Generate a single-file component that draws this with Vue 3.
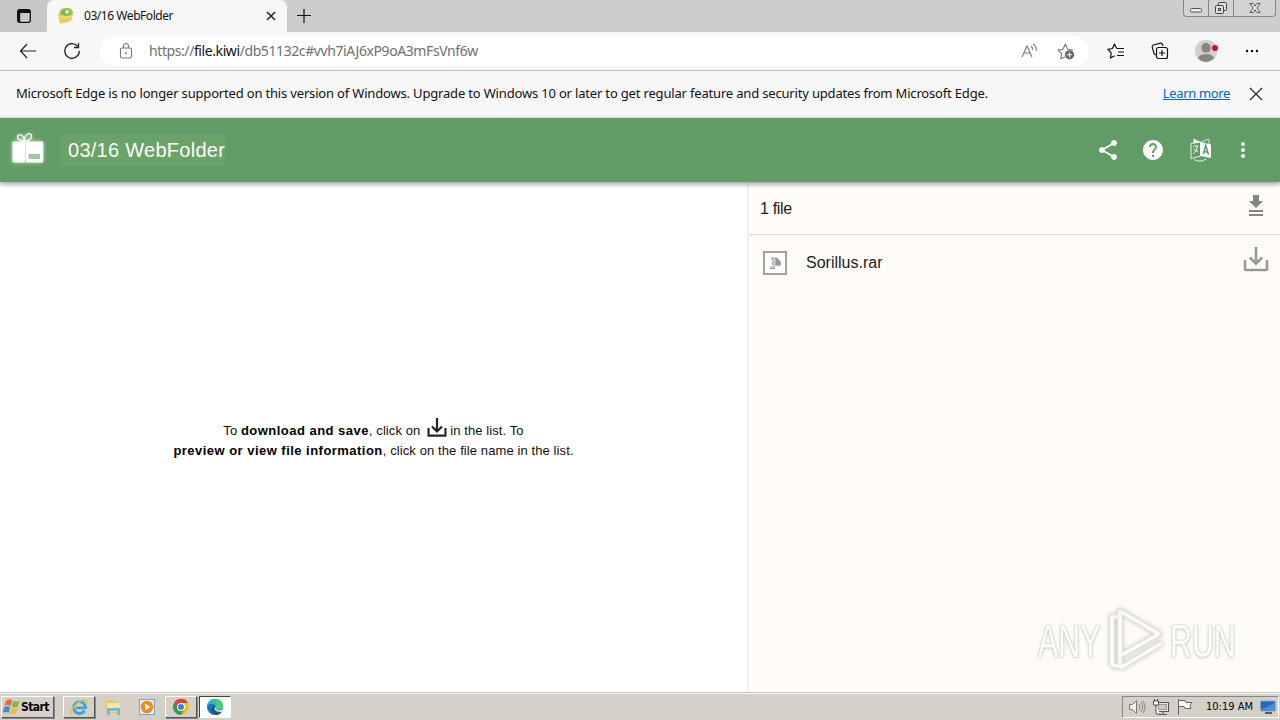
<script setup>
import { ref } from 'vue'

const title = ref('03/16 WebFolder')
const files = ref([{ name: 'Sorillus.rar' }])
const time = '10:19 AM'
</script>

<template>
  <div class="screen">
    <div class="tab-strip">
      <div class="tab-actions">
        <svg width="16" height="16" viewBox="0 0 16 16">
          <rect x="1.7" y="1.7" width="12.6" height="12.6" rx="2" fill="none" stroke="#111" stroke-width="1.3" />
          <path d="M1.5 5V3.5a2 2 0 0 1 2-2h9a2 2 0 0 1 2 2V5zM1.5 4h2.7v10h-1a2 2 0 0 1-1.700-2z" fill="#111" />
        </svg>
      </div>
      <div class="tab">
        <svg class="favicon" width="18" height="18" viewBox="0 0 18 18">
          <path d="M2 8Q2 2 8 1q6-1 8 4l-1 5-11 2z" fill="#9cc653" />
          <path d="M4 6q2-4 6-3l4 3-5 4z" fill="#77b84b" />
          <circle cx="10" cy="5" r="2" fill="#d8e8c0" />
          <path d="M1 7l7 2 8-1-2 6-11 3z" fill="#e9ce59" />
          <path d="M2 9l6 2 6-2" fill="none" stroke="#f6e48c" />
        </svg>
        <span class="tab-title">{{ title }}</span>
        <svg class="tab-close" width="10" height="10" viewBox="0 0 10 10">
          <path d="M1 1l8 8M9 1L1 9" stroke="#222" stroke-width="1.5" />
        </svg>
      </div>
      <svg class="new-tab" width="16" height="16" viewBox="0 0 16 16">
        <path d="M8 1v14M1 7.500h14" stroke="#111" stroke-width="1.2" />
      </svg>
      <div class="window-controls">
        <span class="control">
          <svg width="14" height="16" viewBox="0 0 14 16">
            <rect x="1.5" y="8.5" width="11" height="3.5" rx="1" fill="#eee" stroke="#555" />
          </svg>
        </span>
        <span class="control">
          <svg width="14" height="16" viewBox="0 0 14 16">
            <g fill="#ddd" stroke="#444">
              <rect x="4.5" y="2.5" width="8" height="8" rx="1" />
              <rect x="1.5" y="5.5" width="8" height="8" rx="1" />
              <rect x="4.5" y="8.5" width="2" height="2" />
            </g>
          </svg>
        </span>
        <span class="control wide">
          <svg width="14" height="16" viewBox="0 0 14 16">
            <path d="M2 3.500h3l2 2.700 2-2.700h3L8.800 8l3.200 4.500h-3l-2-2.700-2 2.700h-3L5.200 8z" fill="#eee" stroke="#555" stroke-width="1" />
          </svg>
        </span>
      </div>
    </div>

    <div class="toolbar">
      <svg class="back" width="18" height="16" viewBox="0 0 18 16">
        <path d="M8 1L1.500 8 8 15M1.500 8H17" fill="none" stroke="#222" stroke-width="1.2" />
      </svg>
      <svg class="reload" width="18" height="18" viewBox="0 0 18 18">
        <path d="M16.300 9A7.300 7.300 0 1 1 14.500 4.200M15.500 1v4.500H11" fill="none" stroke="#222" stroke-width="1.3" />
      </svg>
      <div class="address">
        <svg class="lock" width="14" height="16" viewBox="0 0 14 16">
          <rect x="1.500" y="5" width="11" height="10" rx="1.500" fill="none" stroke="#777" stroke-width="1.1" />
          <path d="M4.500 5V3a2.500 2.500 0 0 1 5 0v2" fill="none" stroke="#777" stroke-width="1.100" />
          <circle cx="7" cy="10.300" r="1" fill="#777" />
        </svg>
        <span class="url">https://<b>file.kiwi</b>/db51132c#vvh7iAJ6xP9oA3mFsVnf6w</span>
        <svg class="read-aloud" width="17" height="16" viewBox="0 0 17 16">
          <path d="M1 14L6 3l5 11M2.800 10h6.400M10 3q2 1.500 1.500 4M12 1q4 2.500 3 7" fill="none" stroke="#777" stroke-width="1.100" />
        </svg>
        <svg class="favorite" width="18" height="18" viewBox="0 0 18 18">
          <path d="M8 15l-4.200 1.800.8-5L1 8l5-.8L8.300 2l2.400 5.200L16 8" fill="none" stroke="#777" stroke-width="1.100" stroke-linejoin="round" />
          <circle cx="12.500" cy="12.800" r="4.600" fill="#666" />
          <path d="M12.500 10.200v5.200M9.900 12.800h5.200" stroke="#fff" stroke-width="1.100" />
        </svg>
      </div>
      <svg class="favorites" width="18" height="18" viewBox="0 0 18 18">
        <path d="M9.500 6.200L7.500 2 5.400 6.500.8 7.400l3.400 3.500-.8 5.100 4.300-2.300M9.500 6.500H17M11 10h6M10 13.500h7" fill="none" stroke="#111" stroke-width="1.200" stroke-linejoin="round" />
      </svg>
      <svg class="collections" width="18" height="18" viewBox="0 0 18 18">
        <path d="M4.500 13L3 11.500 1.200 5Q1 3.500 2.500 3l7-1.800q1.500-.2 2 1.300L12 4" fill="none" stroke="#111" stroke-width="1.200" />
        <rect x="5.500" y="5.500" width="11" height="11" rx="2" fill="#f7f7f7" stroke="#111" stroke-width="1.200" />
        <path d="M11 8v6M8 11h6" stroke="#111" stroke-width="1.200" />
      </svg>
      <svg class="avatar" width="24" height="24" viewBox="0 0 24 24">
        <circle cx="12" cy="12" r="11.200" fill="#d0d0ce" />
        <circle cx="12" cy="8.800" r="4.800" fill="#888583" />
        <path d="M4 19.500Q5 15 12 15t8 4.500Q12 26.500 4 19.500z" fill="#888583" />
        <circle cx="21" cy="9" r="3" fill="#d4121d" />
      </svg>
      <svg class="more" width="14" height="4" viewBox="0 0 14 4">
        <circle cx="2" cy="2" r="1.200" /><circle cx="7" cy="2" r="1.200" /><circle cx="12" cy="2" r="1.200" />
      </svg>
    </div>

    <div class="info-bar">
      <span class="info-text">Microsoft Edge is no longer supported on this version of Windows. Upgrade to Windows 10 or later to get regular feature and security updates from Microsoft Edge.</span>
      <a class="learn-more">Learn more</a>
      <svg width="14" height="14" viewBox="0 0 14 14">
        <path d="M1 1l12 12M13 1L1 13" stroke="#222" stroke-width="1.100" />
      </svg>
    </div>

    <header class="app-header">
      <svg class="gift" width="36" height="36" viewBox="0 0 36 36">
        <g fill="none" stroke="#fff" stroke-width="1.300">
          <path d="M16 9Q9 8 9.500 4.500 11 1 14.500 4q2 2 1.500 5z" />
          <path d="M16.500 9q-.5-5 3.500-7 4-1 3.500 3-1.500 4-7 4z" />
        </g>
        <rect x="4.500" y="9.500" width="12.700" height="21" rx="1" fill="#fff" />
        <rect x="17.800" y="9.500" width="17.400" height="21" rx="1" fill="#fff" />
        <rect x="20.500" y="22" width="11.500" height="5" fill="#a5c5a5" />
      </svg>
      <h1 class="title">{{ title }}</h1>
      <svg class="share" width="24" height="24" viewBox="0 0 24 24">
        <path d="M18 16.080c-.76 0-1.440.3-1.960.77L8.910 12.700c.05-.23.09-.46.09-.7s-.04-.47-.09-.7l7.050-4.110c.54.5 1.250.81 2.040.81 1.660 0 3-1.340 3-3s-1.340-3-3-3-3 1.340-3 3c0 .24.04.47.09.7L8.040 9.810C7.500 9.310 6.790 9 6 9c-1.660 0-3 1.340-3 3s1.340 3 3 3c.79 0 1.500-.31 2.040-.81l7.120 4.160c-.05.21-.08.43-.08.65 0 1.610 1.310 2.920 2.920 2.920s2.920-1.310 2.920-2.920-1.310-2.920-2.920-2.920z" fill="#fff" />
      </svg>
      <svg class="help" width="24" height="24" viewBox="0 0 24 24">
        <path d="M12 2C6.480 2 2 6.480 2 12s4.480 10 10 10 10-4.480 10-10S17.520 2 12 2zm1 17h-2v-2h2v2zm2.070-7.750l-.9.920C13.450 12.900 13 13.500 13 15h-2v-.5c0-1.100.45-2.100 1.170-2.830l1.240-1.260c.37-.36.59-.86.59-1.410 0-1.100-.9-2-2-2s-2 .9-2 2H8c0-2.210 1.790-4 4-4s4 1.790 4 4c0 .88-.36 1.680-.93 2.250z" fill="#fff" />
      </svg>
      <svg class="translate" width="24" height="24" viewBox="0 0 24 24">
        <path d="M2 5.500l9.500-1.500v14L2 20.500z" fill="none" stroke="#e8f2e8" />
        <path d="M4.500.5l7 3.500-7 1z" fill="#fff" />
        <path d="M12 4l8-3v5" fill="none" stroke="#d7e8d7" />
        <path d="M11.500 4L22 6.500V20l-10.500-2z" fill="#fff" />
        <path d="M4.500 8.500l4-1q0 5-4 8M4.500 11l4.500 3" fill="none" stroke="#fff" />
        <path d="M14.300 16l2.500-8.500 2.700 9.200M15 13.500l4 .7" fill="none" stroke="#619b65" stroke-width="1.500" />
        <path d="M5 21.500q6 3.500 12-.5" fill="none" stroke="#e8f2e8" />
      </svg>
      <svg class="dots" width="24" height="24" viewBox="0 0 24 24" fill="#fff">
        <circle cx="12" cy="6" r="2" /><circle cx="12" cy="12" r="2" /><circle cx="12" cy="18" r="2" />
      </svg>
    </header>

    <main class="content">
      <section class="preview">
        <p class="hint">
          <span class="hint-line first">To <b>download and save</b>, click on
            <svg class="hint-icon" width="20" height="20" viewBox="0 0 26 26">
              <path d="M2 13v10h22V13M13 0v17M6.500 11l6.500 6.500 6.500-6.500" fill="none" stroke="#222" stroke-width="2.800" />
            </svg>in the list. To</span>
          <span class="hint-line second"><b>preview or view file information</b>, click on the file name in the list.</span>
        </p>
      </section>
      <aside class="file-panel">
        <div class="panel-head">
          <span class="count">{{ files.length }} file</span>
          <svg width="16" height="22" viewBox="0 0 16 22">
            <path d="M5 0h6v6h4l-7 7-7-7h4zM1 15h14v2H1zM1 19h14v2H1z" fill="#858580" />
          </svg>
        </div>
        <div v-for="file in files" :key="file.name" class="file-row">
          <svg class="file-icon" width="24" height="24" viewBox="0 0 24 24">
            <rect x="1" y="1" width="22" height="22" fill="#fff" stroke="#a3a3a3" stroke-width="2" />
            <path d="M8 6h6l4 4v5h-6v2H7v-2h2V8H8z" fill="#ccc" />
            <path d="M13 7l4 4v3h-4zM9.500 7v2M9.500 11v2M7 17.500h5" fill="#999" stroke="#999" />
          </svg>
          <span class="file-name">{{ file.name }}</span>
          <svg class="save" width="26" height="26" viewBox="0 0 26 26">
            <path d="M2 14v9q0 1 1 1h20q1 0 1-1v-9M13 1v16M6.800 11.500L13 17.700l6.200-6.200" fill="none" stroke="#999994" stroke-width="2.600" />
          </svg>
        </div>
        <div class="watermark">
          <span>ANY</span>
          <svg width="60" height="66" viewBox="0 0 60 66">
            <g fill="none" stroke-linejoin="round">
              <path d="M10 10H5v47l6 3M13 4v45l39-22zM13 61l42-25M13 61V50" stroke="#e5e4df" stroke-width="6" />
              <path d="M10 10H5v47l6 3M13 4v45l39-22zM13 61l42-25M13 61V50" stroke="#fdfcf8" stroke-width="3" />
            </g>
          </svg>
          <span class="run">RUN</span>
        </div>
      </aside>
    </main>

    <footer class="taskbar">
      <div class="start raised">
        <svg width="18" height="18" viewBox="0 0 18 18">
          <path d="M3 3q3-3 6-.8L7.500 8q-3-2-6 0z" fill="#e96934" />
          <path d="M10 2.800q3 2 6.500-.3L15 8.500q-3 2-6.300 0z" fill="#85b83d" />
          <path d="M1.200 9.200q3-2 6 0L5.700 15q-3-2.200-6 0z" fill="#4389cb" />
          <path d="M8.400 9.700q3 2 6.300 0L13 15.600q-3 2-6.200 0z" fill="#edbd3d" />
        </svg>
        <span>Start</span>
      </div>
      <div class="task raised">
        <svg width="18" height="18" viewBox="0 0 18 18">
          <path d="M14.500 12.500q-1.500 3-5 3a5.900 5.900 0 1 1 6-5.700H6" fill="none" stroke="#3ba2da" stroke-width="2.800" />
          <path d="M2 16.500Q-1 14 5 7.500 12-.5 16.500 2.500q1 1-.5 3.500" fill="none" stroke="#e9bd3b" stroke-width="1.500" />
        </svg>
      </div>
      <div class="task">
        <svg width="18" height="18" viewBox="0 0 18 18">
          <path d="M2 2h6l1 2h7v11H2z" fill="#e7c669" />
          <path d="M3 5h13v9H3z" fill="#f6e6a4" />
          <path d="M3 10h13v7h-3v-4H6v4H3z" fill="#78b9d5" />
        </svg>
      </div>
      <div class="task">
        <svg width="18" height="18" viewBox="0 0 18 18">
          <rect x="1.500" y="1.500" width="15" height="15" fill="#e4f0f9" stroke="#6fa9d0" />
          <circle cx="9" cy="9" r="6.300" fill="#ef8a20" />
          <path d="M7 5.500l5.500 3.500L7 12.500z" fill="#fff" />
        </svg>
      </div>
      <div class="task raised">
        <svg width="18" height="18" viewBox="0 0 18 18">
          <circle cx="9" cy="9" r="8" fill="#efbe31" />
          <path d="M2 5a8 8 0 0 0 7 12l3.500-6z" fill="#3a9a50" />
          <path d="M2 5a8 8 0 0 1 14 0H9v4H4.500z" fill="#d94335" />
          <circle cx="9" cy="9" r="4" fill="#fff" /><circle cx="9" cy="9" r="3" fill="#4380d8" />
        </svg>
      </div>
      <div class="task active">
        <svg width="18" height="18" viewBox="0 0 18 18">
          <circle cx="9" cy="9" r="8" fill="#1476bb" />
          <path d="M1 8q1-7 8-7 7 0 8 7 0 4-5 4-3 0-3-2 2-3-2-4-3-1-6 2z" fill="#32b7bd" />
          <path d="M10 1q7 1 7 7 0 4-5 4-3 0-3-2 3-2 1-6z" fill="#55c975" />
          <path d="M9 8q-2 4 2 6 3 1 5-1-1 3-5 4-6-1-6-5 0-3 4-4z" fill="#145795" />
          <path d="M9.500 8.500q-1 4 3 4 2 .3 4.500-1l-1 2q-5 1-7-1.500-1-2 .5-3.500z" fill="#fff" />
        </svg>
      </div>
      <div class="tray">
        <svg class="volume" width="18" height="18" viewBox="0 0 18 18">
          <path d="M1.500 6.500h3l4-4v13l-4-4h-3z" fill="#f5f5f5" stroke="#777" />
          <path d="M11 6q2 3 0 6M13 4q3.500 5 0 10M15 3q4 6 0 12" fill="none" stroke="#888" />
        </svg>
        <svg class="network" width="18" height="18" viewBox="0 0 18 18">
          <rect x="4.500" y="4.500" width="12" height="9" fill="#e8e8e8" stroke="#555" />
          <rect x="6.500" y="6.500" width="8" height="5" fill="#ccc" stroke="#999" />
          <path d="M7 16.500h8M11 14v2" stroke="#555" />
          <path d="M1.500 3v4h5V3zM2.500 1v2M5.500 1v2M4 7v9h4" fill="#fff" stroke="#555" />
        </svg>
        <svg class="flag" width="18" height="18" viewBox="0 0 18 18">
          <path d="M2.500 1v16M3 2.500h6l1 2h6l-2 3 1 3H9l-1-2H3" fill="#fafafa" stroke="#666" />
        </svg>
        <span class="clock">{{ time }}</span>
        <svg class="desktop" width="16" height="16" viewBox="0 0 16 16">
          <rect x=".5" y="2" width="15" height="10" rx="1" fill="#2b66b5" stroke="#87a9cf" />
          <path d="M1 10Q8 9 15 3v8H1z" fill="#4d8ed5" />
          <path d="M5 14h7" stroke="#333" stroke-width="1.500" />
        </svg>
      </div>
    </footer>
  </div>
</template>

<style>
body {
  margin: 0;
  overflow: hidden;
}
</style>

<style scoped>
* {
  box-sizing: border-box;
}

svg {
  display: block;
  flex: none;
}

.screen {
  width: 1280px;
  height: 720px;
  display: flex;
  flex-direction: column;
  overflow: hidden;
  font-family: 'Liberation Sans', Arial, sans-serif;
  background: #fff;
}

.tab-strip {
  height: 32px;
  flex: none;
  display: flex;
  background: #cdcdcd;
}

.tab-actions {
  width: 47px;
  padding: 8px 0 0 16px;
  border-bottom-right-radius: 6px;
  background: #c8c8c8;
}

.tab {
  width: 240px;
  display: flex;
  align-items: center;
  padding: 0 11px 0 10px;
  background: #f7f7f7;
  border-radius: 7px 7px 0 0;
}

.tab-title {
  margin-left: 9px;
  font: 12px/16px 'Noto Sans', sans-serif;
  letter-spacing: -0.45px;
  color: #111;
  white-space: nowrap;
}

.tab-close {
  margin-left: auto;
}

.new-tab {
  margin: 8px 0 0 9px;
}

.window-controls {
  height: 17px;
  margin: 0 4px 0 auto;
  display: flex;
  border: 1px solid #858585;
  border-top: 0;
  border-radius: 0 0 4px 4px;
  background: #d3d3d3;
}

.control {
  width: 25px;
  display: flex;
  justify-content: center;
  border-right: 1px solid #858585;
}

.control.wide {
  width: 41px;
  border-right: 0;
}

.toolbar {
  height: 39px;
  flex: none;
  display: flex;
  align-items: center;
  padding-left: 19px;
  background: #f7f7f7;
  border-bottom: 1px solid #bdbdbd;
}

.reload {
  margin-left: 26px;
}

.address {
  width: 988px;
  height: 30px;
  margin-left: 19px;
  display: flex;
  align-items: center;
  padding: 0 13px 0 19px;
  border-radius: 15px;
  background: #fff;
}

.url {
  margin-left: 16px;
  font: 14px/20px 'Noto Sans', sans-serif;
  letter-spacing: -0.41px;
  color: #707070;
  white-space: nowrap;
}

.url b {
  font-weight: 400;
  color: #111;
}

.read-aloud {
  margin-left: auto;
}

.favorite {
  margin-left: 19px;
}

.favorites {
  margin-left: 19px;
}

.collections {
  margin-left: 26px;
}

.avatar {
  margin-left: 25px;
}

.more {
  margin-left: 27px;
}

.info-bar {
  height: 47px;
  flex: none;
  display: flex;
  align-items: center;
  padding: 0 17px 0 16px;
  font: 13px/18px 'Noto Sans', sans-serif;
  color: #111;
  background: #f7f7f7;
  border-bottom: 1px solid #e5eee5;
  white-space: nowrap;
}

.info-text {
  padding-bottom: 2px;
  letter-spacing: -0.175px;
}

.learn-more {
  margin: 0 19px 0 auto;
  padding-bottom: 2px;
  letter-spacing: -0.35px;
  color: #0067b8;
  text-decoration: underline;
}

.app-header {
  position: relative;
  z-index: 1;
  height: 64px;
  flex: none;
  display: flex;
  align-items: center;
  padding: 0 25px 0 8px;
  background: #619b65;
  box-shadow: 0 2px 5px rgba(0, 0, 0, 0.4);
}

.gift {
  filter: drop-shadow(0 0 2px rgba(255, 255, 255, 0.7));
}

.title {
  width: 165px;
  height: 32px;
  margin: 0 auto 0 16px;
  padding-left: 8px;
  font-size: 20px;
  font-weight: 400;
  line-height: 32px;
  letter-spacing: 0.27px;
  white-space: nowrap;
  color: #fff;
  background: #69a367;
}

.help {
  margin-left: 21px;
}

.translate {
  margin-left: 24px;
}

.dots {
  margin-left: 18px;
}

.content {
  flex: 1;
  min-height: 0;
  display: flex;
}

.preview {
  width: 747px;
  display: flex;
  align-items: center;
  justify-content: center;
}

.hint {
  margin: 7px 0 0;
  font-size: 13px;
  line-height: 20px;
  letter-spacing: 0.1px;
  color: #111;
  text-align: center;
  white-space: nowrap;
}

.hint b {
  letter-spacing: 0.47px;
  color: #000;
}

.hint-line {
  display: block;
}

.hint-icon {
  display: inline-block;
  margin: -4px 3px 0 3px;
  vertical-align: -3px;
}

.file-panel {
  position: relative;
  flex: 1;
  border-left: 2px solid #f2f1ec;
  background: #fffcf7;
}

.panel-head {
  height: 53px;
  display: flex;
  align-items: center;
  justify-content: space-between;
  padding: 0 16px 4px 11px;
  font-size: 16px;
  color: #222;
  border-bottom: 1px solid #dddcd7;
}

.count {
  padding-top: 6px;
  letter-spacing: -0.35px;
}

.file-row {
  height: 56px;
  display: flex;
  align-items: center;
  padding: 0 11px 0 14px;
  color: #222;
}

.file-name {
  margin-left: 19px;
  font-size: 16px;
}

.save {
  margin: 0 0 8px auto;
}

/* the overlay sits in the corner of the panel */
.watermark {
  position: absolute;
  right: 46px;
  bottom: 19px;
  display: flex;
  align-items: center;
  font-size: 46px;
  line-height: 52px;
  color: #fdfdfb;
  text-shadow:
    0 0 2px #c4c3be,
    0 0 2px #d4d3ce,
    0 1px 4px #cccbc6;
}

.watermark span {
  width: 64px;
  padding-top: 2px;
  transform: scaleX(0.66);
  transform-origin: left;
  white-space: nowrap;
}

.watermark svg {
  margin: 0 3px 0 5px;
  filter: drop-shadow(0 0 2px #c4c3be);
}

.taskbar {
  height: 28px;
  flex: none;
  display: flex;
  align-items: center;
  padding: 0 1px;
  background: #d4d0c8;
  border-top: 1px solid #c8c5be;
  box-shadow: inset 0 1px #f8f6f1;
}

.raised {
  border: 1px solid;
  border-color: #fff #555 #555 #fff;
  box-shadow: 1px 1px #888;
}

.start {
  width: 53px;
  height: 22px;
  margin-right: 9px;
  display: flex;
  align-items: center;
  padding-left: 1px;
  font: bold 12px 'DejaVu Sans Condensed', 'DejaVu Sans', sans-serif;
  letter-spacing: -0.6px;
  color: #000;
}

.task {
  width: 32px;
  height: 22px;
  margin-right: 2px;
  display: flex;
  align-items: center;
  justify-content: center;
}

.task.active {
  background: #fff;
  border: 1px solid;
  border-color: #444 #fff #fff #444;
}

.tray {
  width: 157px;
  height: 22px;
  margin-left: auto;
  display: flex;
  align-items: center;
  padding-left: 5px;
  border: 1px solid;
  border-color: #888 #fff #fff #888;
}

.network,
.flag {
  margin-left: 6px;
}

.clock {
  margin: 0 auto 0 12px;
  font: 11px 'DejaVu Sans Condensed', 'DejaVu Sans', sans-serif;
  color: #000;
  white-space: nowrap;
}

.desktop {
  margin-right: 2px;
}
</style>
